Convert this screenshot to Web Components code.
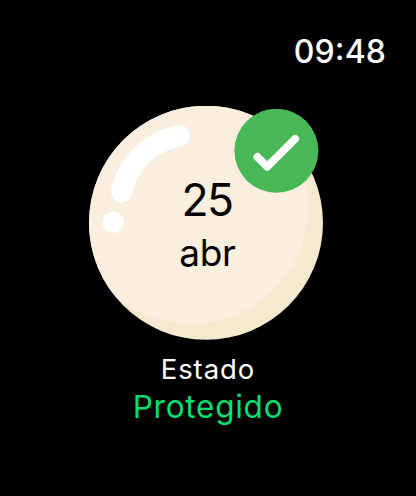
<!DOCTYPE html>
<html lang="es">
<head>
<meta charset="utf-8">
<title>Estado</title>
<style>
	body {
		margin: 0;
		background: #000;
		color: #fff;
		font-family: Inter, Roboto, "Liberation Sans", sans-serif;
	}
</style>
</head>
<body>
<watch-screen>
	<watch-time slot="time">09:48</watch-time>
	<pearl-date>
		<span slot="day">25</span>
		<span slot="month">abr</span>
		<check-badge slot="badge"></check-badge>
	</pearl-date>
	<status-label>
		<span slot="title">Estado</span>
		<span slot="value">Protegido</span>
	</status-label>
</watch-screen>

<script>
// Full screen column: clock on top, content below
class WatchScreen extends HTMLElement {
	constructor() {
		super();
		this.attachShadow({ mode: 'open' });
		this.shadowRoot.innerHTML = `
			<style>
				:host {
					display: flex;
					flex-direction: column;
					box-sizing: border-box;
					width: 416px;
					height: 496px;
					overflow: hidden;
					background: #000;
				}
				header {
					display: flex;
					justify-content: flex-end;
					height: 71px;
					padding: 32px 30px 0 0;
					box-sizing: border-box;
				}
				main {
					display: flex;
					flex-direction: column;
					align-items: center;
					padding-top: 35px;
				}
			</style>
			<header><slot name="time"></slot></header>
			<main><slot></slot></main>
		`;
	}
}

class WatchTime extends HTMLElement {
	constructor() {
		super();
		this.attachShadow({ mode: 'open' });
		this.shadowRoot.innerHTML = `
			<style>
				:host {
					display: block;
					font-size: 32px;
					font-weight: 500;
					line-height: 40px;
					letter-spacing: 0.1px;
					font-feature-settings: "case";
					white-space: nowrap;
				}
			</style>
			<slot></slot>
		`;
	}
}

// Round pearl with the date in the middle and a badge in its corner
class PearlDate extends HTMLElement {
	constructor() {
		super();
		this.attachShadow({ mode: 'open' });
		this.shadowRoot.innerHTML = `
			<style>
				:host {
					display: grid;
					position: relative;
					width: 234px;
					height: 234px;
					margin-right: 4px;
					color: #000;
				}
				svg, .date {
					grid-area: 1 / 1;
				}
				.date {
					position: relative;
					display: flex;
					flex-direction: column;
					align-items: center;
					padding-top: 67px;
				}
				.day {
					padding-left: 2px;
					font-size: 44.5px;
					line-height: 55px;
					letter-spacing: -1.6px;
				}
				.month {
					padding-left: 3px;
					font-size: 37px;
					line-height: 50px;
					letter-spacing: -0.3px;
				}
				.badge {
					position: absolute;
					top: 3px;
					left: 145px;
				}
			</style>
			<svg width="234" height="234" viewBox="0 0 234 234">
				<defs>
					<clipPath id="pearl"><circle cx="117" cy="116.8" r="117"/></clipPath>
				</defs>
				<circle cx="117" cy="116.8" r="117" fill="#f7e8d0"/>
				<circle cx="102.2" cy="101" r="117" fill="#faeedf" clip-path="url(#pearl)"/>
				<path d="M32.6 86A71.5 71.5 0 0 1 90.8 29.9" fill="none" stroke="#fff" stroke-width="21.2" stroke-linecap="round"/>
				<circle cx="24.2" cy="116.3" r="10.6" fill="#fff"/>
			</svg>
			<div class="date">
				<div class="day"><slot name="day"></slot></div>
				<div class="month"><slot name="month"></slot></div>
			</div>
			<div class="badge"><slot name="badge"></slot></div>
		`;
	}
}

class CheckBadge extends HTMLElement {
	constructor() {
		super();
		this.attachShadow({ mode: 'open' });
		this.shadowRoot.innerHTML = `
			<style>
				:host, svg { display: block; }
			</style>
			<svg width="85" height="84" viewBox="0 0 85 84">
				<circle cx="42.4" cy="41.8" r="42" fill="#49b857"/>
				<path d="M23.5 48L33.2 57.8L61.2 29.8" fill="none" stroke="#fff" stroke-width="7.8" stroke-linecap="round" stroke-linejoin="round"/>
			</svg>
		`;
	}
}

class StatusLabel extends HTMLElement {
	constructor() {
		super();
		this.attachShadow({ mode: 'open' });
		this.shadowRoot.innerHTML = `
			<style>
				:host {
					display: flex;
					flex-direction: column;
					align-items: center;
					padding-top: 11px;
				}
				.title {
					font-size: 27.5px;
					line-height: 36px;
					letter-spacing: 0.95px;
				}
				.value {
					color: #04de71;
					font-size: 31.5px;
					line-height: 40px;
					letter-spacing: 0.75px;
				}
			</style>
			<div class="title"><slot name="title"></slot></div>
			<div class="value"><slot name="value"></slot></div>
		`;
	}
}

customElements.define('watch-screen', WatchScreen);
customElements.define('watch-time', WatchTime);
customElements.define('pearl-date', PearlDate);
customElements.define('check-badge', CheckBadge);
customElements.define('status-label', StatusLabel);
</script>
</body>
</html>
